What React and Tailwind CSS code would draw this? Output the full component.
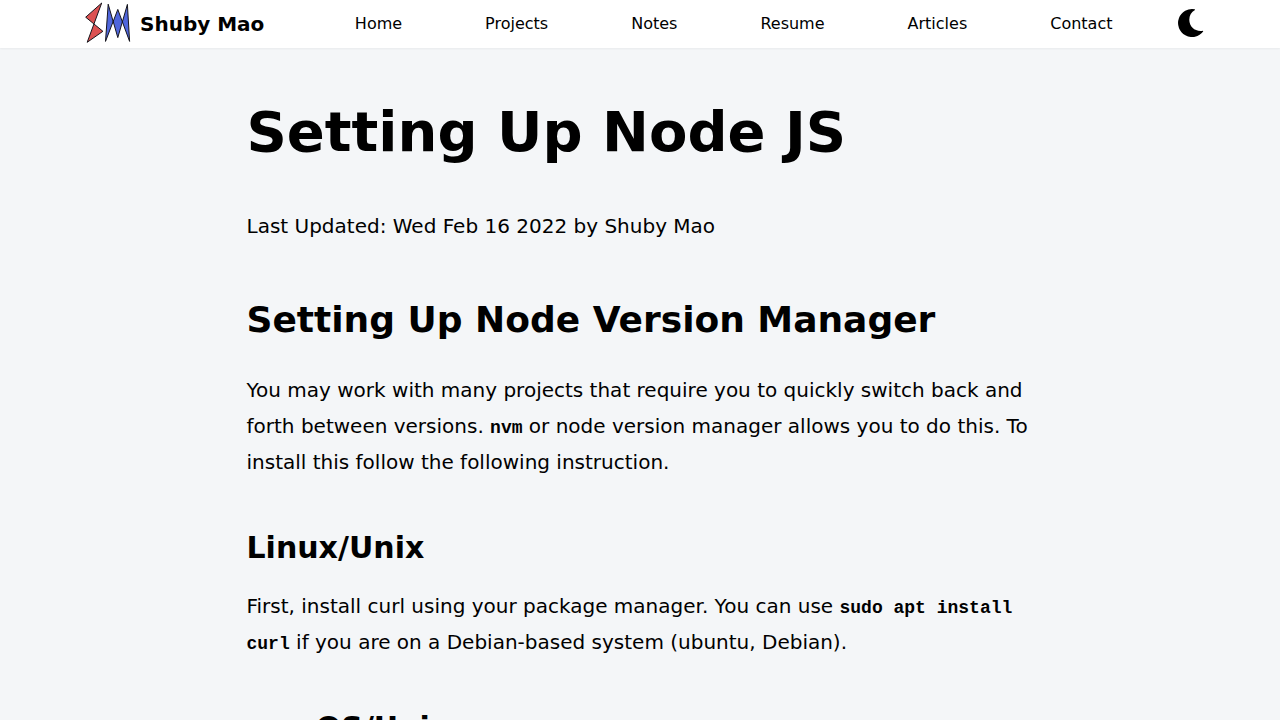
const links = ["Home", "Projects", "Notes", "Resume", "Articles", "Contact"];

function Logo() {
  return (
    <svg viewBox="0 0 48 48" className="h-12 w-12" stroke="#15151c" strokeWidth="1" strokeLinejoin="round" aria-hidden="true">
      <path d="M17.700 3 1.700 17.200 18.900 31.300 3.200 42.300Z" fill="#dc5252" />
      <path d="M21.500 41.400 24.200 4.200 33.800 37.600 43.400 4.400 45.600 41.400 33.800 9.400Z" fill="#4f66dc" />
    </svg>
  );
}

function Moon() {
  return (
    <svg viewBox="0 0 28 28" className="h-7 w-7" fill="currentColor" aria-hidden="true">
      <path d="M16.800 .3A14 14 0 1 0 25.200 22.500L25 21.700C17.500 23 11.300 18 11.300 10.700 11.300 6.500 13.300 3 17 1Z" />
    </svg>
  );
}

function Code({ children }) {
  return (
    <code className="font-['Liberation_Mono',monospace] text-[18px] leading-none font-bold">{children}</code>
  );
}

export default function App() {
  return (
    <div className="min-h-screen bg-[#f4f6f8] font-['DejaVu_Sans',sans-serif] text-black">
      <header className="flex h-12 items-center bg-white pr-[74px] pl-[84px] shadow-[0_1px_2px_0_rgba(0,0,0,0.05)]">
        <a href="#home" className="flex shrink-0 items-center gap-2 text-xl font-bold">
          <Logo />
          Shuby Mao
        </a>
        <nav className="ml-[49px] flex flex-1 items-center justify-around">
          {links.map((name) => (
            <a key={name} href={`#${name.toLowerCase()}`}>
              {name}
            </a>
          ))}
        </nav>
        <button type="button" aria-label="Toggle dark mode" className="ml-6 shrink-0 pb-0.5">
          <Moon />
        </button>
      </header>
      <main className="mx-auto max-w-[827px] px-5 pt-14 text-xl leading-9">
        <h1 className="mb-12 text-[56px] leading-[56px] font-extrabold">Setting Up Node JS</h1>
        <p>Last Updated: Wed Feb 16 2022 by Shuby Mao</p>
        <h2 className="mt-14 mb-8 text-4xl leading-10 font-bold">Setting Up Node Version Manager</h2>
        <p>
          You may work with many projects that require you to quickly switch back and forth between
          versions. <Code>nvm</Code> or node version manager allows you to do this. To install this
          follow the following instruction.
        </p>
        <h3 className="mt-12 mb-5 text-3xl leading-10 font-bold">Linux/Unix</h3>
        <p>
          First, install curl using your package manager. You can use <Code>sudo apt install curl</Code>{" "}
          if you are on a Debian-based system (ubuntu, Debian).
        </p>
        <h3 className="mt-12 text-3xl leading-10 font-bold">macOS/Unix</h3>
      </main>
    </div>
  );
}
